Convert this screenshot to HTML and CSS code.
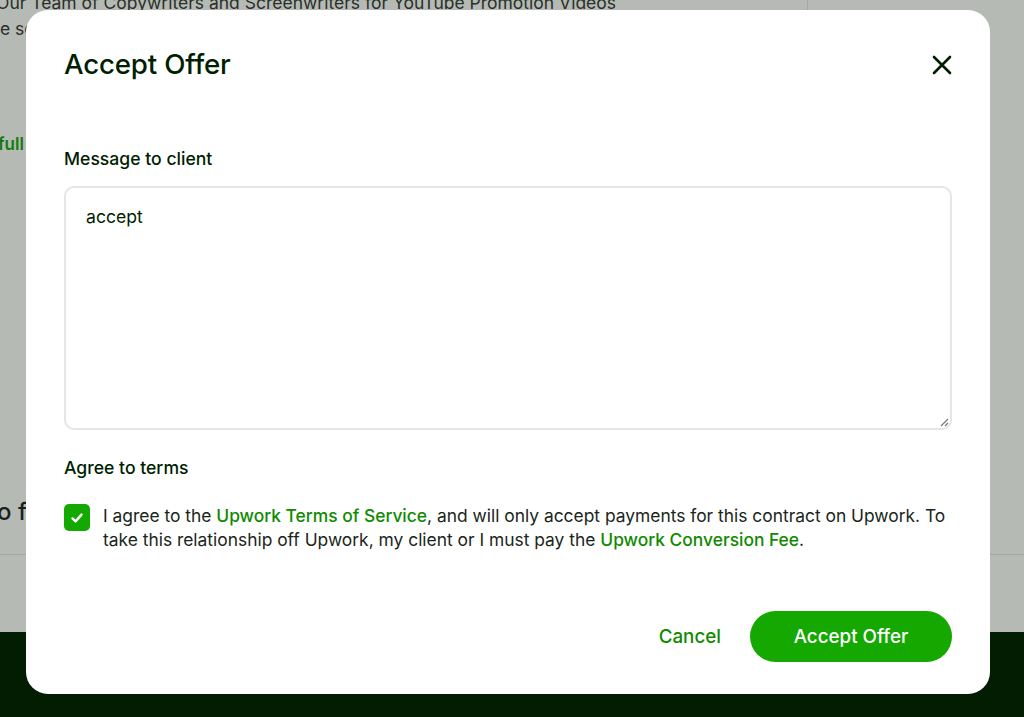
FILE: index.html
```html
<!DOCTYPE html>
<html lang="en">
<head>
<meta charset="utf-8">
<link rel="stylesheet" href="styles.css">
</head>
<body>
<div class="page">
  <div class="content">
    <div class="main-col">
      <p class="bg-title">Our Team of Copywriters and Screenwriters for YouTube Promotion Videos</p>
      <p class="bg-line">e service details</p>
      <p class="bg-link">full offer</p>
      <p class="bg-heading">o full service</p>
    </div>
    <div class="side-col"></div>
  </div>
  <div class="divider"></div>
  <div class="footer"></div>
</div>

<div class="modal">
  <div class="modal-head">
    <h1 class="modal-title">Accept Offer</h1>
    <button class="close" aria-label="Close">
      <svg width="20" height="20" viewBox="0 0 20 20"><path d="M2 2L18 18M18 2L2 18" stroke="#001e00" stroke-width="2.6" stroke-linecap="round"/></svg>
    </button>
  </div>
  <label class="label msg-label">Message to client</label>
  <div class="textarea">accept
    <svg class="grip" width="10" height="10" viewBox="0 0 10 10"><path d="M9 2L2 9M9 6L6 9" stroke="#777" stroke-width="1.2"/></svg>
  </div>
  <div class="label terms-label">Agree to terms</div>
  <div class="terms">
    <span class="check">
      <svg width="16" height="16" viewBox="0 0 16 16"><path d="M3.5 8.4L6.6 11.4L12.5 4.6" fill="none" stroke="#fff" stroke-width="2.4" stroke-linecap="round" stroke-linejoin="round"/></svg>
    </span>
    <p class="terms-text">I agree to the <a class="lnk">Upwork Terms of Service</a>, and will only accept payments for this contract on Upwork. To take this relationship off Upwork, my client or I must pay the <a class="lnk">Upwork Conversion Fee</a>.</p>
  </div>
  <div class="actions">
    <button class="btn-cancel">Cancel</button>
    <button class="btn-primary">Accept Offer</button>
  </div>
</div>
</body>
</html>
```
FILE: styles.css
```css
* { box-sizing: border-box; }
html, body { margin: 0; padding: 0; }
body {
  width: 1024px;
  height: 717px;
  overflow: hidden;
  background: #b5bab4;
  font-family: "Inter", "Liberation Sans", sans-serif;
  color: #001e00;
  position: relative;
}
.page { width: 1024px; height: 717px; display: flex; flex-direction: column; }
.content { display: flex; height: 554px; }
.main-col { width: 808px; border-right: 1px solid #a4a9a3; }
.side-col { flex: 1; }
.bg-title { margin: -8px 0 0 -4px; font-size: 17.5px; color: #2a2f2a; white-space: nowrap; }
.bg-line { margin: 5px 0 0 0; font-size: 17.5px; color: #2a2f2a; white-space: nowrap; }
.bg-link { margin: 95px 0 0 -2px; font-size: 17px; font-weight: 600; color: #147a0c; white-space: nowrap; }
.bg-heading { margin: 343px 0 0 -3px; font-size: 24px; font-weight: 500; color: #1a1f1a; white-space: nowrap; }
.divider { height: 1px; background: #a4a9a3; }
.footer { margin-top: 77px; flex: 1; background: #031d03; }

.modal {
  position: absolute;
  left: 26px; top: 10px;
  width: 964px; height: 684px;
  background: #fff;
  border-radius: 22px;
  padding: 36px 38px 32px 38px;
  display: flex;
  flex-direction: column;
}
.modal-head { display: flex; justify-content: space-between; align-items: center; height: 36px; }
.modal-title { margin: 0; font-size: 27.7px; font-weight: 500; letter-spacing: -0.2px; }
.close { border: 0; background: none; padding: 0; width: 20px; height: 20px; display: flex; margin-top: 2px; }
.label { font-size: 17.6px; line-height: 20px; font-weight: 500; }
.msg-label { margin-top: 67px; }
.textarea {
  margin-top: 17px;
  height: 244px;
  border: 2px solid #e4e6e3;
  border-radius: 10px;
  padding: 19px 20px;
  font-size: 17.6px;
  line-height: 20px;
  position: relative;
}
.grip { position: absolute; right: 1px; bottom: 1px; }
.terms-label { margin-top: 28px; }
.terms { display: flex; gap: 13px; margin-top: 26px; }
.check {
  flex: none;
  width: 26px; height: 27px;
  border-radius: 5px;
  background: #14a800;
  display: flex; align-items: center; justify-content: center;
}
.terms-text { margin: 0; font-size: 17.4px; line-height: 24px; color: #1a261a; }
.lnk { color: #108a00; font-weight: 500; }
.actions { margin-top: auto; display: flex; justify-content: flex-end; align-items: center; gap: 29px; }
.btn-cancel { border: 0; background: none; font-family: inherit; font-size: 18.8px; font-weight: 500; color: #108a00; padding: 0; }
.btn-primary {
  border: 0; background: #14a800; color: #fff;
  font-family: inherit; font-size: 18.8px; font-weight: 500;
  width: 202px; height: 51px; border-radius: 26px;
}
```
